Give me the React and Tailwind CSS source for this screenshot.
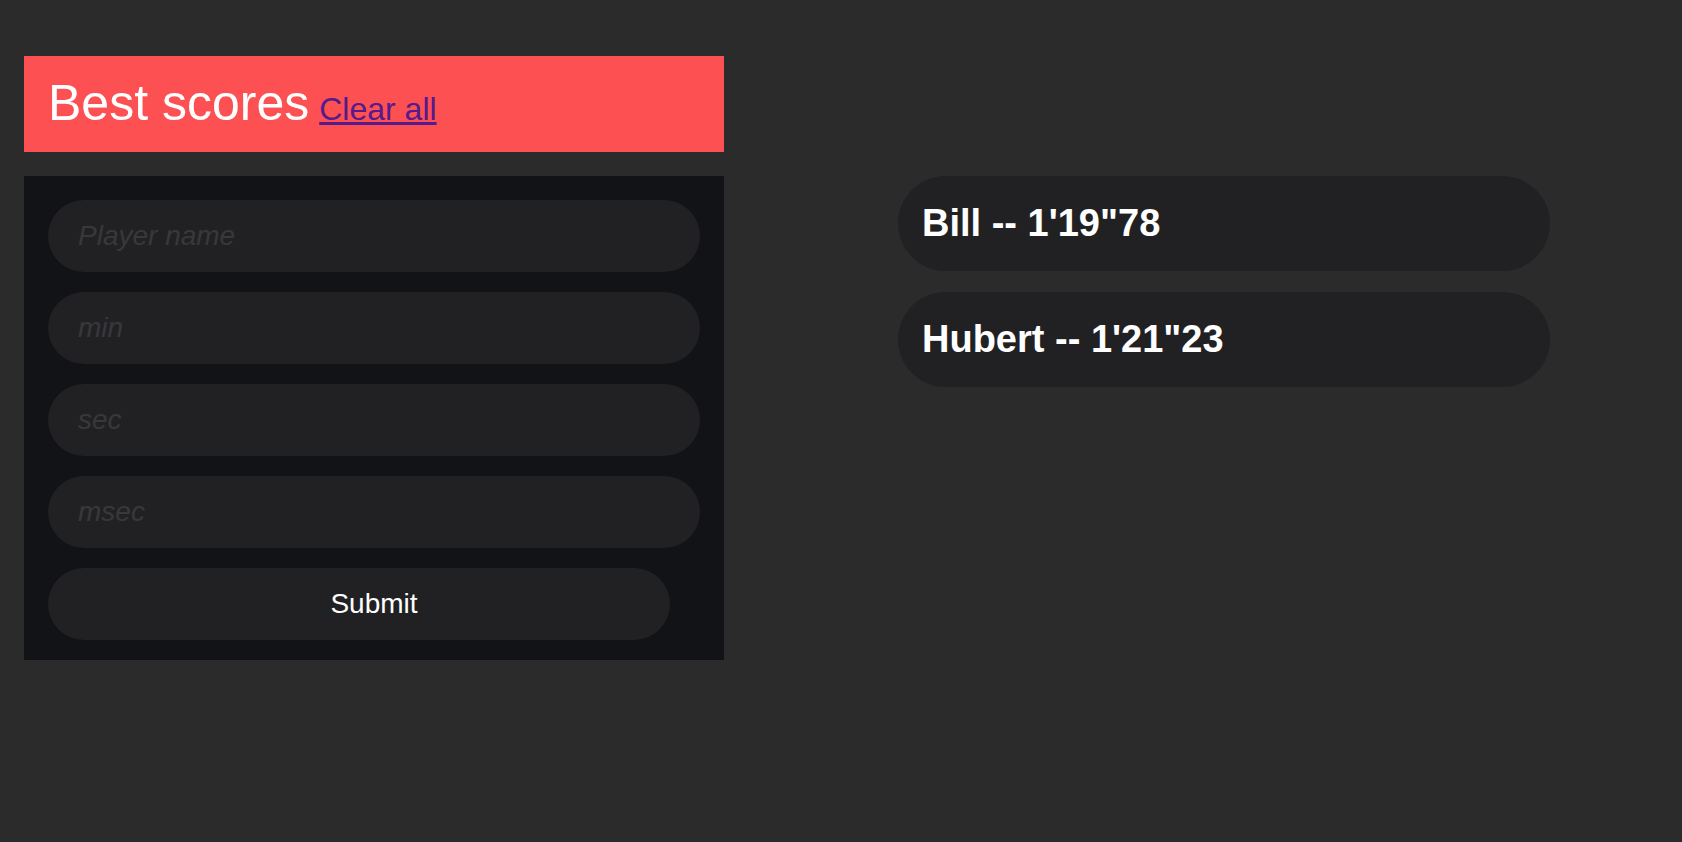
const scores = [
  { name: 'Bill', time: `1'19"78` },
  { name: 'Hubert', time: `1'21"23` },
]

const fields = ['Player name', 'min', 'sec', 'msec']

export default function App() {
  return (
    <div
      className="min-h-screen bg-[#2b2b2b] pt-[56px] pl-[24px]"
      style={{ fontFamily: '"Liberation Sans", Arial, sans-serif' }}
    >
      <div className="flex items-start">
        <div className="w-[700px]">
          <div className="flex h-[96px] items-baseline bg-[#fc5052] px-[24px] pt-[20px]">
            <h1 className="text-[50px] leading-[55px] font-normal text-white">
              Best scores
            </h1>
            <a href="#" className="ml-[10px] text-[32px] text-[#551a8b] underline">
              Clear all
            </a>
          </div>

          <form className="mt-[24px] flex flex-col gap-[20px] bg-[#121317] px-[24px] pt-[24px] pb-[20px]">
            {fields.map((f) => (
              <input
                key={f}
                type="text"
                placeholder={f}
                className="w-[652px] rounded-full bg-[#212124] py-[20px] pl-[30px] text-[28px] leading-[32px] text-white italic outline-none placeholder:text-[#38383b]"
              />
            ))}
            <button
              type="button"
              className="flex h-[72px] w-[622px] items-center justify-center rounded-full bg-[#212124] pl-[30px] text-[28px] text-white"
            >
              Submit
            </button>
          </form>
        </div>

        <ul className="mt-[120px] ml-[174px] flex w-[652px] flex-col gap-[21px]">
          {scores.map((s) => (
            <li
              key={s.name}
              className="flex h-[95px] items-center rounded-full bg-[#212124] pl-[24px] text-[38px] font-bold text-white"
            >
              {s.name} -- {s.time}
            </li>
          ))}
        </ul>
      </div>
    </div>
  )
}
